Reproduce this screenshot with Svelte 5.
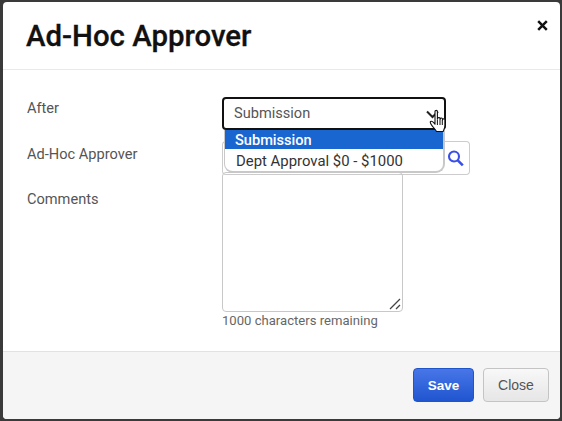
<script>
	const options = ["Submission", "Dept Approval $0 - $1000"];
	let remaining = 1000;
</script>

<div class="modal">
	<header>
		<h1>Ad-Hoc Approver</h1>
		<button class="x" aria-label="Close">
			<svg width="11" height="11" viewBox="0 0 11 11"><path d="M1.2 1.2 9.8 9.8M9.8 1.2 1.2 9.8" stroke="#111" stroke-width="2.5" fill="none" /></svg>
		</button>
	</header>

	<main>
		<div class="row first">
			<span class="label">After</span>
			<div class="select">
				<span>Submission</span>
				<svg class="chev" width="13" height="9" viewBox="0 0 13 9"><path d="M1 1.500 6.500 7 12 1.500" stroke="#222" stroke-width="2" fill="none" /></svg>
				<ul>
					{#each options as opt, i}
						<li class:active={i === 0}>{opt}</li>
					{/each}
				</ul>
				<svg class="cursor" width="19" height="24" viewBox="0 0 19 23">
					<path d="M6 2c0-1.500 2.400-1.500 2.400 0v7.500l.3-.6c.2-1.300 2.200-1.300 2.300 0l.1 1 .2-.6c.2-1.200 2.100-1.100 2.200.1v1l.3-.4c.3-1.100 2.100-.9 2.100.3V16c0 2.500-1 3.800-1.700 6H7.500C6.500 20 4.800 18.500 2.800 15.800 1.400 14 .7 12.800 1.600 12c1-.8 2.600.3 4.400 2.700Z" fill="#fff" stroke="#111" stroke-width="1.100" stroke-linejoin="round" />
					<path d="M8.400 10v5.500M11 10v5.500M13.300 10.500v5" stroke="#111" stroke-width="1" fill="none" />
				</svg>
			</div>
		</div>

		<div class="row second">
			<span class="label">Ad-Hoc Approver</span>
			<div class="lookup">
				<div class="input"></div>
				<button class="search" aria-label="Search">
					<svg width="17" height="18" viewBox="0 0 17 18"><circle cx="7" cy="7.500" r="5" stroke="#3a4fe6" stroke-width="2.100" fill="none" /><path d="M10.800 11.300 15.800 16.300" stroke="#3a4fe6" stroke-width="2.600" /></svg>
				</button>
			</div>
		</div>

		<div class="row third">
			<span class="label">Comments</span>
			<div class="comments">
				<div class="textarea">
					<svg class="grip" width="12" height="12" viewBox="0 0 12 12"><path d="M1 11 11 1M7 11l4-4" stroke="#444" stroke-width="1.300" fill="none" /></svg>
				</div>
				<small>{remaining} characters remaining</small>
			</div>
		</div>
	</main>

	<footer>
		<button class="save">Save</button>
		<button class="close">Close</button>
	</footer>
</div>

<style>
	:global(body) {
		background: #3a3a3a;
		font-family: Roboto, sans-serif;
	}

	.modal {
		box-sizing: border-box;
		width: 557px;
		height: 417px;
		margin: 2px 0 0 3px;
		background: #fff;
		border-radius: 4px;
		display: flex;
		flex-direction: column;
		overflow: hidden;
	}

	header {
		height: 68px;
		flex: none;
		box-sizing: border-box;
		border-bottom: 1px solid #e9e9e9;
		display: flex;
		justify-content: space-between;
		align-items: flex-start;
		padding: 17px 12px 0 23px;
	}

	h1 {
		margin: 0;
		font-size: 29.4px;
		line-height: 34px;
		font-weight: 500;
		color: #111;
		-webkit-text-stroke: 0.3px #111;
	}

	.x {
		border: 0;
		background: none;
		padding: 0;
		margin-top: 1px;
		width: 11px;
		height: 11px;
		display: flex;
	}

	main {
		flex: 1;
		padding: 27px 0 0 24px;
	}

	.row {
		display: grid;
		grid-template-columns: 195px 1fr;
	}

	.label {
		font-size: 14.6px;
		line-height: 20px;
		color: #555;
		padding-top: 1px;
	}

	.second {
		margin-top: 11px;
	}

	.second .label {
		padding-top: 3px;
	}

	.third {
		margin-top: -3px;
	}

	.third .label {
		padding-top: 17px;
	}

	.select {
		position: relative;
		box-sizing: border-box;
		width: 224px;
		height: 33px;
		border: 2px solid #111;
		border-radius: 4px;
		display: flex;
		align-items: center;
		padding: 0 0 2px 10px;
		font-size: 14.6px;
		color: #555;
	}

	.chev {
		position: absolute;
		left: 202px;
		top: 11px;
	}

	ul {
		position: absolute;
		z-index: 2;
		left: 0;
		top: 31px;
		width: 221px;
		box-sizing: border-box;
		margin: 0;
		padding: 0;
		list-style: none;
		background: #fff;
		border: solid #c8c8c8;
		border-width: 0 2px 2px 1px;
		border-radius: 0 0 9px 9px;
		font-size: 14.9px;
		overflow: hidden;
	}

	li {
		padding-left: 11px;
		height: 22px;
		line-height: 24px;
		color: #333;
	}

	li.active {
		background: #1a66d1;
		color: #fff;
		font-weight: 500;
		height: 19px;
		line-height: 20px;
		padding-left: 10px;
		font-size: 14.6px;
	}

	.cursor {
		position: absolute;
		z-index: 3;
		left: 205px;
		top: 10px;
	}

	.lookup {
		display: flex;
		height: 34px;
		width: 248px;
	}

	.input {
		flex: 1;
		box-sizing: border-box;
		border: 1px solid #ccc;
		border-right: 0;
		border-radius: 4px 0 0 4px;
	}

	.search {
		box-sizing: border-box;
		width: 24px;
		padding: 0 4px 0 0;
		background: #fff;
		border: 1px solid #ccc;
		border-left: 0;
		border-radius: 0 4px 4px 0;
		display: flex;
		align-items: center;
		justify-content: center;
	}

	.textarea {
		position: relative;
		box-sizing: border-box;
		width: 181px;
		height: 140px;
		border: 1px solid #c8c8c8;
		border-radius: 4px;
	}

	.grip {
		position: absolute;
		right: 1px;
		bottom: 1px;
	}

	small {
		display: block;
		font-size: 13.1px;
		line-height: 18px;
		color: #666;
	}

	footer {
		height: 68px;
		flex: none;
		box-sizing: border-box;
		background: #f5f5f5;
		border-top: 1px solid #e2e2e2;
		display: flex;
		justify-content: flex-end;
		align-items: flex-start;
		gap: 9px;
		padding: 16px 11px 0 0;
	}

	footer button {
		height: 34px;
		border-radius: 4px;
		font-family: "Liberation Sans", Arial, sans-serif;
		font-size: 14px;
		padding: 0;
	}

	.save {
		width: 61px;
		color: #fff;
		font-weight: 700;
		font-size: 13.5px;
		border: 1px solid #1f55c8;
		background: linear-gradient(#4876e8, #1f55cf);
	}

	.close {
		width: 66px;
		color: #555;
		border: 1px solid #c4c4c4;
		background: linear-gradient(#f8f8f8, #e6e6e6);
	}
</style>
